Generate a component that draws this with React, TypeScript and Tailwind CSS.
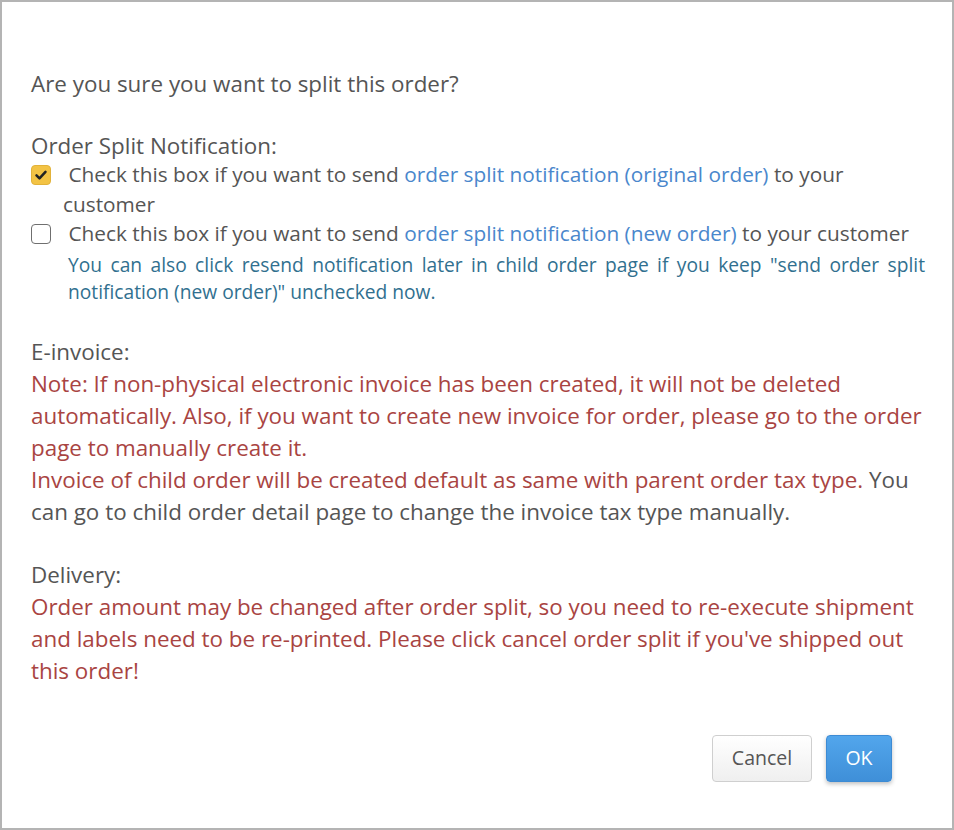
import React from "react";

function CheckIcon() {
  return (
    <svg viewBox="0 0 20 20" className="h-[20px] w-[20px]">
      <path d="M5 10.5 L8.3 13.8 L15 6.5" fill="none" stroke="#222" strokeWidth="2.8" strokeLinecap="round" strokeLinejoin="round" />
    </svg>
  );
}

export default function App() {
  return (
    <div
      className="w-[954px] h-[830px] border-2 border-[#b4b4b4] bg-white text-[#555555] flex flex-col"
      style={{ fontFamily: '"Open Sans", "Noto Sans", sans-serif' }}
    >
      <div className="pl-[29px] pr-[27px] text-[22.4px]">
        <p className="mt-[67px] leading-[30px]">Are you sure you want to split this order?</p>

        <div className="mt-[31.5px] leading-[29.5px]">
          <div>Order Split Notification:</div>
          <div className="flex text-[20.8px]">
            <div className="w-[32px] shrink-0 pt-[5px]">
              <div className="h-[20px] w-[20px] rounded-[4px] bg-[#f3c344] border border-[#e2b23a] flex items-center justify-center">
                <CheckIcon />
              </div>
            </div>
            <div>
              &nbsp;Check this box if you want to send{" "}
              <span className="text-[#4a87cc]">order split notification (original order)</span> to your customer
            </div>
          </div>
          <div className="flex text-[20.8px]">
            <div className="w-[32px] shrink-0 pt-[5px]">
              <div className="h-[20px] w-[20px] rounded-[4px] border-[1.5px] border-[#6f6f6f] bg-white" />
            </div>
            <div>
              &nbsp;Check this box if you want to send{" "}
              <span className="text-[#4a87cc]">order split notification (new order)</span> to your customer
            </div>
          </div>
          <div className="pl-[37px] mt-[2px] text-[19.2px] leading-[27px] text-[#31708f] text-justify">
            You can also click resend notification later in child order page if you keep "send order split notification (new order)" unchecked now.
          </div>
        </div>

        <div className="mt-[32.5px] leading-[32px]">
          <div className="leading-[30.5px]">E-invoice:</div>
          <div>
            <span className="text-[#a94442]">
              Note: If non-physical electronic invoice has been created, it will not be deleted automatically. Also, if you want to create new invoice for order, please go to the order page to manually create it.
            </span>
            <br />
            <span className="text-[#a94442]">
              Invoice of child order will be created default as same with parent order tax type.
            </span>{" "}
            You can go to child order detail page to change the invoice tax type manually.
          </div>
        </div>

        <div className="mt-[31px] leading-[32px]">
          <div>Delivery:</div>
          <div className="text-[#a94442]">
            Order amount may be changed after order split, so you need to re-execute shipment and labels need to be re-printed. Please click cancel order split if you've shipped out this order!
          </div>
        </div>
      </div>

      <div className="mt-[48px] flex justify-end gap-[14px] pr-[60px]">
        <button className="h-[47px] w-[100px] rounded-[4px] border border-[#cfcfcf] bg-gradient-to-b from-[#ffffff] to-[#efefef] text-[19.5px] text-[#555555]">
          Cancel
        </button>
        <button className="h-[47px] w-[66px] rounded-[4px] border border-[#3d8bd4] bg-gradient-to-b from-[#52a6ec] to-[#3f8fd8] text-[19.5px] text-white shadow-[0_2px_4px_rgba(0,0,0,0.25)]">
          OK
        </button>
      </div>
    </div>
  );
}
